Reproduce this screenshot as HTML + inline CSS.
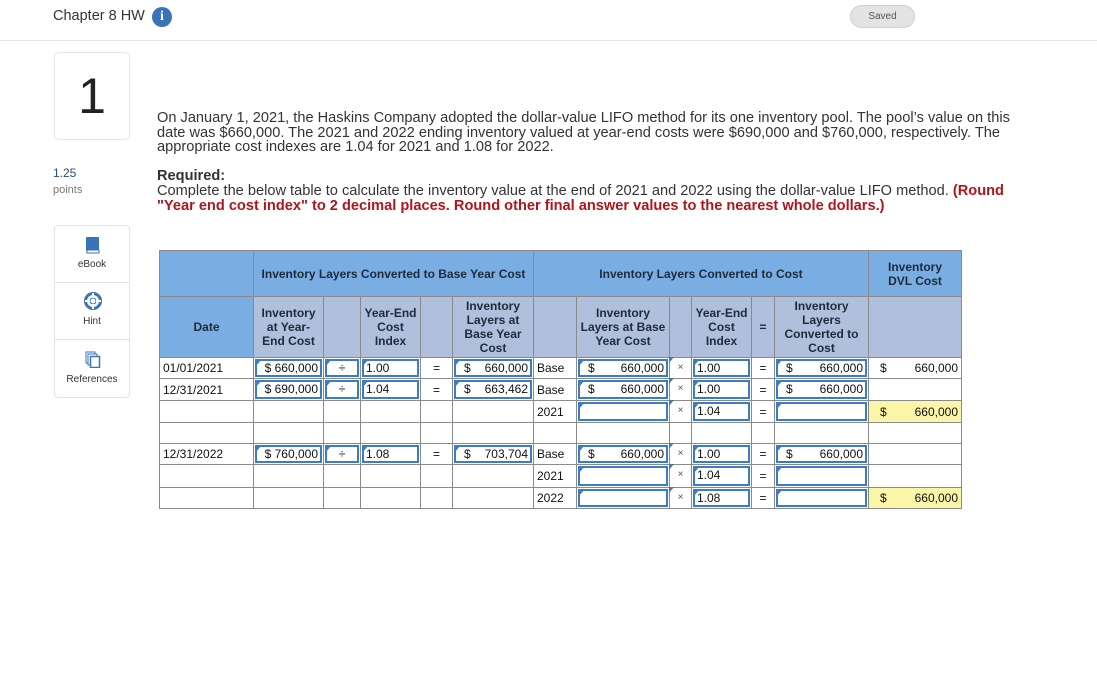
<!DOCTYPE html>
<html><head><meta charset="utf-8"><style>
*{margin:0;padding:0;box-sizing:border-box}
body{width:1097px;height:698px;background:#fff;font-family:"Liberation Sans",Arial,sans-serif;color:#222;position:relative;overflow:hidden}
.top{position:absolute;left:0;top:0;width:1097px;height:41px;border-bottom:1px solid #e6e6e6;background:#fff}
.title{position:absolute;left:53px;top:8px;font-size:14.5px;color:#333}
.info{position:absolute;left:152px;top:7px;width:20px;height:20px;border-radius:50%;background:#3a73b8;color:#fff;font:bold 14px "Liberation Serif",serif;text-align:center;line-height:20px}
.saved{position:absolute;left:850px;top:5px;width:65px;height:23px;border-radius:12px;background:#e3e3e3;border:1px solid #d0d0d0;font-size:10px;color:#555;text-align:center;line-height:21px}
.qnum{position:absolute;left:54px;top:52px;width:76px;height:88px;border:1px solid #e4e4e4;border-radius:5px;text-align:center;font-size:50px;line-height:86px;color:#222}
.pts{position:absolute;left:53px;top:166px;font-size:12px;color:#2a4f7a}
.pts2{position:absolute;left:53px;top:184px;font-size:11px;color:#777}
.tools{position:absolute;left:54px;top:225px;width:76px;height:173px;border:1px solid #e4e4e4;border-radius:4px}
.tool{height:57px;border-bottom:1px solid #e4e4e4;text-align:center;font-size:10px;color:#333;position:relative}
.tool:last-child{border-bottom:none}
.tool span{position:absolute;left:0;right:0;bottom:12px}
.q{position:absolute;left:157px;top:111px;width:880px;font-size:14.6px;line-height:14.6px;color:#333}
.red{color:#b0151c;font-weight:bold}
table{position:absolute;left:159px;top:250px;border-collapse:collapse;table-layout:fixed;font-size:12px;font-family:"Liberation Sans",Arial,sans-serif;color:#111}
td{border:1px solid #8a8a8a;position:relative;padding:0 3px;white-space:nowrap}
.h1 td{background:#7aaee3;height:46px;text-align:center;font-weight:bold;color:#1d2a3a}
.h2 td{background:#b0c0dc;height:61px;text-align:center;line-height:14px;color:#1d2a3a;font-weight:bold}
.h2 td.b{background:#7aaee3}
.in{position:absolute;left:1px;right:1px;top:1px;bottom:1px;border:2px solid #3a7cc6;padding:0 2px;line-height:15px;background:#fff}
.in::before,.tr::before{content:"";position:absolute;left:-1px;top:-1px;border-top:6px solid #3a7cc6;border-right:5px solid transparent}
.tr{position:absolute;left:0;top:0;right:0;bottom:0;text-align:center;line-height:20px;font-size:10px;color:#555}
.r{text-align:right}.c{text-align:center}
.in .d{float:left;padding-left:6px}
.y{background:#fbf5a8}
.dl{float:left;padding-left:8px}
</style></head><body>
<div class="top"><div class="title">Chapter 8 HW</div><div class="info">i</div><div class="saved">Saved</div></div>
<div class="qnum">1</div>
<div class="pts">1.25</div><div class="pts2">points</div>
<div class="tools">
<div class="tool"><svg style="position:absolute;left:30px;top:10px" width="15" height="18" viewBox="0 0 15 18"><rect x="1" y="1" width="13" height="14" rx="1" fill="#3a73b8"/><rect x="2" y="14" width="12" height="3" fill="#fff" stroke="#3a73b8"/></svg><span>eBook</span></div>
<div class="tool"><svg style="position:absolute;left:29px;top:9px" width="18" height="18" viewBox="0 0 18 18"><circle cx="9" cy="9" r="7.5" fill="none" stroke="#3a73b8" stroke-width="3"/><circle cx="9" cy="9" r="3" fill="#fff" stroke="#3a73b8"/><path d="M9 1v5M9 12v5M1 9h5M12 9h5" stroke="#fff" stroke-width="2"/></svg><span>Hint</span></div>
<div class="tool"><svg style="position:absolute;left:30px;top:11px" width="16" height="17" viewBox="0 0 16 17"><rect x="1" y="1" width="9" height="11" fill="#fff" stroke="#3a73b8"/><rect x="3" y="3" width="9" height="11" fill="#fff" stroke="#3a73b8"/><rect x="5.5" y="5.5" width="9" height="11" fill="#fff" stroke="#3a73b8" stroke-width="1.5"/></svg><span>References</span></div>
</div>
<div class="q">On January 1, 2021, the Haskins Company adopted the dollar-value LIFO method for its one inventory pool. The pool’s value on this<br>date was $660,000. The 2021 and 2022 ending inventory valued at year-end costs were $690,000 and $760,000, respectively. The<br>appropriate cost indexes are 1.04 for 2021 and 1.08 for 2022.<br><br><b>Required:</b><br>Complete the below table to calculate the inventory value at the end of 2021 and 2022 using the dollar-value LIFO method. <span class="red">(Round<br>"Year end cost index" to 2 decimal places. Round other final answer values to the nearest whole dollars.)</span></div>
<table>
<colgroup><col style="width:94px"><col style="width:70px"><col style="width:37px"><col style="width:60px"><col style="width:32px"><col style="width:81px"><col style="width:43px"><col style="width:93px"><col style="width:22px"><col style="width:60px"><col style="width:23px"><col style="width:94px"><col style="width:93px"></colgroup>
<tr class="h1"><td></td><td colspan="5">Inventory Layers Converted to Base Year Cost</td><td colspan="6">Inventory Layers Converted to Cost</td><td style="line-height:14px">Inventory<br>DVL Cost</td></tr>
<tr class="h2"><td class="b">Date</td><td>Inventory<br>at Year-<br>End Cost</td><td></td><td>Year-End<br>Cost<br>Index</td><td></td><td>Inventory<br>Layers at<br>Base Year<br>Cost</td><td></td><td>Inventory<br>Layers at Base<br>Year Cost</td><td></td><td>Year-End<br>Cost<br>Index</td><td>=</td><td>Inventory<br>Layers<br>Converted to<br>Cost</td><td></td></tr>
<tr style="height:21px"><td>01/01/2021</td><td><div class="in r">$ 660,000</div></td><td><div class="in c">÷</div></td><td><div class="in">1.00</div></td><td class="c">=</td><td><div class="in r"><span class="d">$</span>660,000</div></td><td>Base</td><td><div class="in r"><span class="d">$</span>660,000</div></td><td><div class="tr">×</div></td><td><div class="in">1.00</div></td><td class="c">=</td><td><div class="in r"><span class="d">$</span>660,000</div></td><td class="r"><span class="dl">$</span>660,000</td></tr>
<tr style="height:22px"><td>12/31/2021</td><td><div class="in r">$ 690,000</div></td><td><div class="in c">÷</div></td><td><div class="in">1.04</div></td><td class="c">=</td><td><div class="in r"><span class="d">$</span>663,462</div></td><td>Base</td><td><div class="in r"><span class="d">$</span>660,000</div></td><td><div class="tr">×</div></td><td><div class="in">1.00</div></td><td class="c">=</td><td><div class="in r"><span class="d">$</span>660,000</div></td><td></td></tr>
<tr style="height:22px"><td></td><td></td><td></td><td></td><td></td><td></td><td>2021</td><td><div class="in"></div></td><td><div class="tr">×</div></td><td><div class="in">1.04</div></td><td class="c">=</td><td><div class="in"></div></td><td class="r y"><span class="dl">$</span>660,000</td></tr>
<tr style="height:21px"><td></td><td></td><td></td><td></td><td></td><td></td><td></td><td></td><td></td><td></td><td></td><td></td><td></td></tr>
<tr style="height:21px"><td>12/31/2022</td><td><div class="in r">$ 760,000</div></td><td><div class="in c">÷</div></td><td><div class="in">1.08</div></td><td class="c">=</td><td><div class="in r"><span class="d">$</span>703,704</div></td><td>Base</td><td><div class="in r"><span class="d">$</span>660,000</div></td><td><div class="tr">×</div></td><td><div class="in">1.00</div></td><td class="c">=</td><td><div class="in r"><span class="d">$</span>660,000</div></td><td></td></tr>
<tr style="height:23px"><td></td><td></td><td></td><td></td><td></td><td></td><td>2021</td><td><div class="in"></div></td><td><div class="tr">×</div></td><td><div class="in">1.04</div></td><td class="c">=</td><td><div class="in"></div></td><td></td></tr>
<tr style="height:21px"><td></td><td></td><td></td><td></td><td></td><td></td><td>2022</td><td><div class="in"></div></td><td><div class="tr">×</div></td><td><div class="in">1.08</div></td><td class="c">=</td><td><div class="in"></div></td><td class="r y"><span class="dl">$</span>660,000</td></tr>
</table>
</body></html>
